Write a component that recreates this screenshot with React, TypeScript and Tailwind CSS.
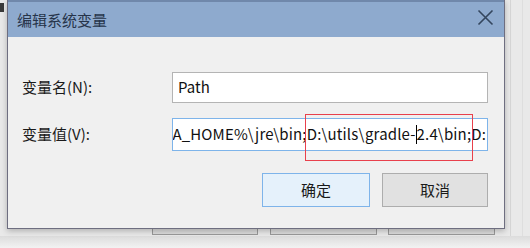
import React from "react";

const font = { fontFamily: '"Noto Sans CJK SC", "Noto Sans", sans-serif' };

export default function App() {
  return (
    <div
      className="relative w-[530px] h-[248px] overflow-hidden bg-[#e9e9e9]"
      style={font}
    >
      {/* desktop behind: left mark */}
      <div className="absolute left-0 top-[3px] w-[4px] h-[9px] bg-[#3a3a3a]" />
      {/* right lines */}
      <div className="absolute left-[510px] top-0 w-px h-[248px] bg-[#d6d6d6]" />
      <div className="absolute left-[522px] top-0 w-px h-[248px] bg-[#dedede]" />
      {/* underlying buttons peeking below */}
      <div className="absolute left-[152px] top-[215px] w-[106px] h-[20px] border border-[#9a9a9a] bg-[#dcdcdc]" />
      <div className="absolute left-[270px] top-[215px] w-[107px] h-[20px] border border-[#9a9a9a] bg-[#dcdcdc]" />
      <div className="absolute left-[388px] top-[215px] w-[107px] h-[20px] border border-[#9a9a9a] bg-[#dcdcdc]" />
      <div className="absolute left-0 top-[236px] w-[530px] h-[12px] bg-gradient-to-b from-[#dcdcdc] to-[#f2f2f2]" />

      {/* dialog */}
      <div className="relative ml-[7px] w-[498px] h-[229px] flex flex-col border border-t-0 border-[#6e6e80] bg-[#f0f0f0] shadow-[0_2px_6px_rgba(0,0,0,0.25)]">
        <div className="h-[37px] flex items-center justify-between bg-[#8eaace] border-t-2 border-[#7088ab] pl-[9px] pr-[10px]">
          <span className="text-[15px] text-[#26344a] leading-none">编辑系统变量</span>
          <svg width="17" height="17" viewBox="0 0 17 17" className="mt-[-4px]">
            <path d="M1.5 1.5 L15.5 15.5 M15.5 1.5 L1.5 15.5" stroke="#34465e" strokeWidth="1.6" />
          </svg>
        </div>

        <div className="flex flex-col pl-[14px] pr-[16px] pt-[35px]">
          <div className="flex items-center h-[31px]">
            <span className="w-[150px] text-[15px] text-[#1a1a1a]">变量名(N):</span>
            <div className="flex-1 h-[31px] bg-white border border-[#b4b4b4] flex items-center pl-[5px] text-[15px] text-[#111]">
              Path
            </div>
          </div>
          <div className="flex items-center h-[33px] mt-[15px]">
            <span className="w-[150px] text-[15px] text-[#1a1a1a]">变量值(V):</span>
            <div className="flex-1 h-[33px] bg-white border border-[#7eb4ea] flex items-center justify-end overflow-hidden pr-[1px] text-[15px] tracking-[0.15px] text-[#111] whitespace-nowrap">
              <span className="flex items-center">
                %JAVA_HOME%\jre\bin;D:\utils\gradle-
                <span className="inline-block w-px h-[19px] bg-black" />
                2.4\bin;D:
              </span>
            </div>
          </div>
          <div className="flex justify-end gap-[12px] mt-[22px]">
            <div className="w-[108px] h-[34px] flex items-center justify-center bg-[#e5f1fb] border border-[#7eb4ea] text-[15px] text-[#1a1a1a]">
              确定
            </div>
            <div className="w-[106px] h-[34px] flex items-center justify-center bg-[#e1e1e1] border border-[#adadad] text-[15px] text-[#1a1a1a]">
              取消
            </div>
          </div>
        </div>

        {/* red highlight rectangle */}
        <div className="absolute left-[297px] top-[114px] w-[168px] h-[47px] border border-[#e8404c]" />
      </div>
    </div>
  );
}
